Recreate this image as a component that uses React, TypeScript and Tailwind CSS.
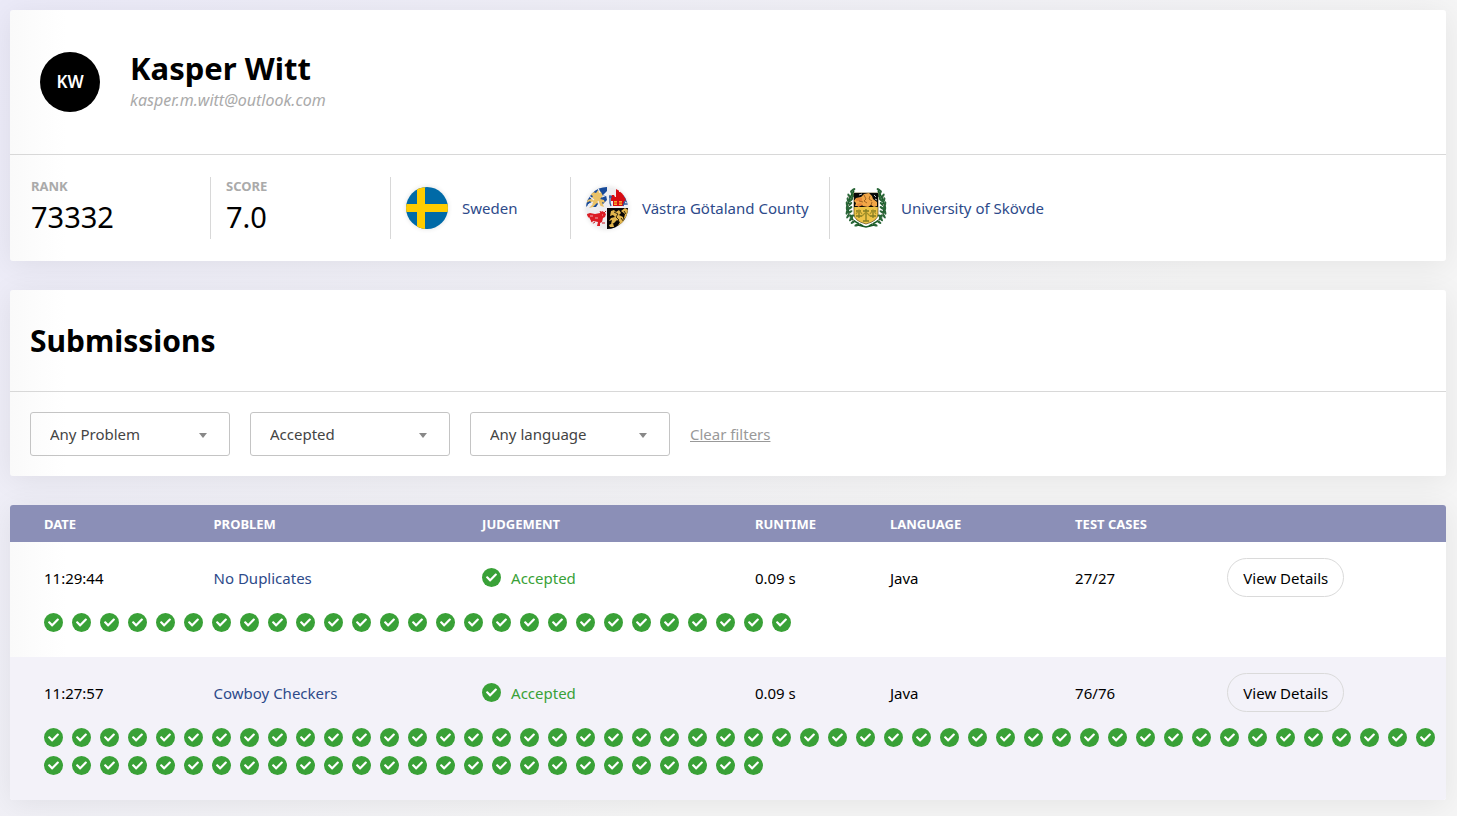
import { useState, type ReactNode } from "react";
import { FaCheck } from "react-icons/fa";

const CARD = "overflow-hidden rounded-[3px] bg-[linear-gradient(to_right,#fafafa,#ffffff_56px)] shadow-[0_4px_30px_rgba(0,0,0,0.07)]";

function CheckBadge() {
  return (
    <span className="flex size-[19px] shrink-0 items-center justify-center rounded-full bg-[#39a137]">
      <FaCheck className="size-[11px] text-white" aria-hidden="true" />
    </span>
  );
}

function Sweden() {
  return (
    <svg viewBox="0 0 42 42" className="size-[42px] rounded-full shadow-[0_0_5px_rgba(0,0,0,0.12)]" aria-hidden="true">
      <rect width="42" height="42" fill="#006aa7" />
      <path d="M11 0h8v42h-8zM0 17h42v8H0z" fill="#fecc00" />
    </svg>
  );
}

function VastraGotaland() {
  return (
    <svg viewBox="0 0 42 42" className="size-[42px] rounded-full shadow-[0_0_5px_rgba(0,0,0,0.12)]" aria-hidden="true">
      <rect width="42" height="42" fill="#eeeef0" />
      <path d="M21 21h21v21H21z" fill="#080604" />
      <path d="M0 20V14l7-9 6-5h8v4l-5 5 4-1 1 5-6 6-1-5-4 6H5l4-5-5 1z" fill="#174a99" />
      <path d="M7 5l3 1 2-3 3 2 2 4-3 3 4 1 1 3-3-1 2 5-3-1-4-3-4 4-4 1 4-4-3-3-4 2 1-3 4-1 2-3-4-2z" fill="#eac268" />
      <path d="M3 9l5 4M12 1l2 5M16 10l5-2M12 14l2 6M2 18l5-3" stroke="#eeeef0" strokeWidth="1.2" fill="none" />
      <path d="M26 8h2l1 2h1V2h3v3h1V2h2v3h2v5h1V8h1v6h-2v5H27v-5h-2V9z" fill="#d80b12" />
      <path d="M28 14h3v4h-3zM33 14h3v4h-3z" fill="#f5ae28" />
      <path d="M28 16h3M33 16h3" stroke="#d80b12" strokeWidth="0.8" />
      <path d="M24 8v8l1 3M23 10h3M38 9l2 2v3l2 2M37 19l2-5M38 17h4" stroke="#315a9d" strokeWidth="1.3" fill="none" />
      <path d="M1 27l3-1 5 1 5-1 2-2 2 1 2 2-1 3-2 1-1 4-2 1v3h-3l1-4-5-1-2 3H3l2-3-2-4-2 3z" fill="#dc1c24" />
      <path d="M15 26l-1-2M18 26l2-2M1 27v7M9 35l-3 2M16 36h3" stroke="#c5161f" strokeWidth="1" fill="none" />
      <path d="M4 29h3M9 31h3M16 28h1" stroke="#eeeef0" strokeWidth="0.7" />
      <path d="M25 24l3-1 2 2 3-2 2 3-2 2 4 2 1 4-3 5-4 1 3-5-3-2-3 3-3 1 1-4-3 1 2-3 4-1-2-2-3 1z" fill="#e3b64d" />
      <path d="M35 24l4-3 3 2v12l-4-4 1-4zM23 38l4-2 1 4h-4zM36 35l4-3v6l-5 1z" fill="#e3b64d" />
      <path d="M28 25l4 2-2 3 3 3-2 2M35 31l3 4-2 4M38 24l2 3" stroke="#080604" strokeWidth="0.8" fill="none" />
    </svg>
  );
}

const LEAVES = [
  [8, 3, 55], [7, 6, -35], [4, 9, -25], [3, 13, -15], [2, 17, -10], [2, 21, 0], [2, 25, 15],
  [3, 29, 30], [6, 32, 40], [8, 35, 55], [12, 38, 70],
  [8, 9, 40], [6, 13, 45], [5, 17, 50], [5, 21, 55], [5, 25, 60], [7, 29, 70],
];

function Laurel() {
  return (
    <g>
      <path d="M9 4Q-3 21 9 34l9 5" fill="none" stroke="#155b22" strokeWidth="1.5" />
      {LEAVES.map(([x, y, angle]) => (
        <ellipse key={`${x}-${y}`} cx={x} cy={y} rx="1.2" ry="2.8" fill="#2a6638" transform={`rotate(${angle} ${x} ${y})`} />
      ))}
      <path d="M3 10h1M3 18h1M4 27h1M8 33h1M14 37h1" stroke="#d5aeb4" strokeWidth="1.2" />
    </g>
  );
}

function Skovde() {
  return (
    <svg viewBox="0 0 42 42" className="size-[42px]" aria-hidden="true">
      <Laurel />
      <g transform="matrix(-1 0 0 1 42 0)">
        <Laurel />
      </g>
      <path d="M9 6h24v21q0 7-12 10Q9 34 9 27z" fill="#edc347" stroke="#5b4b14" strokeWidth="0.7" />
      <path d="M9 6h24v14H9z" fill="#090909" />
      <path d="M11 11l5-1 3-3 5-1 3 3 1 3 4 3v4l-3 1-3-2-3 2-5-1-2-2-3 2h-3l1-3-2-2z" fill="#f2a647" />
      <path d="M11 11h6v3h-6zM12 17l4-1 2 2-5 2z" fill="#e8883a" />
      <path d="M19 8l2 4-2 2 3 2M25 9l-1 3 3 2M14 14l4 1M27 15l-1 3" stroke="#8c5419" strokeWidth="0.8" fill="none" />
      <path d="M14 8l3-1M29 8l2 2M30 12l2 1" stroke="#d9dadd" strokeWidth="0.9" fill="none" />
      <path d="M21 22v12M14 25v6M28 25v6M11 24h5M18 24h6M26 24h5M11 29h6M25 29h6M18 34h6" stroke="#817c23" strokeWidth="1.3" />
      <path d="M11 27l3-4 3 4M25 27l3-4 3 4M17 29l4-4 4 4" stroke="#a49128" strokeWidth="1.2" fill="none" />
      <path d="M13 38l8 2 8-2" stroke="#185825" strokeWidth="1.4" fill="none" />
    </svg>
  );
}

function Figure({ label, value }: { label: string; value: string }) {
  return (
    <div className="flex flex-col">
      <span className="text-[13px] leading-[18px] font-bold text-[#aaaaaa]">{label}</span>
      <span className="text-[29px] leading-[44px]">{value}</span>
    </div>
  );
}

function Place({ icon, name, className }: { icon: ReactNode; name: string; className: string }) {
  return (
    <div className={`flex items-center gap-[14px] px-[15px] ${className}`}>
      {icon}
      <a href="#" className="text-[#2d4a8a]">{name}</a>
    </div>
  );
}

function Filter({ label, options, initial }: { label: string; options: string[]; initial: string }) {
  const [value, setValue] = useState(initial);
  return (
    <div className="relative w-[200px]">
      <select
        aria-label={label}
        value={value}
        onChange={(e) => setValue(e.target.value)}
        className="h-11 w-full appearance-none rounded-[3px] border border-[#c4c4c4] bg-transparent pr-10 pl-[19px] text-[15px] text-[#444444]"
      >
        {options.map((o) => (
          <option key={o}>{o}</option>
        ))}
      </select>
      <svg viewBox="0 0 8 5" className="pointer-events-none absolute top-[21px] right-[23px] h-[5px] w-[8px]" aria-hidden="true">
        <path d="M0 0h8L4 5z" fill="#888888" />
      </svg>
    </div>
  );
}

const COLUMNS = [
  { name: "DATE", width: "w-[13.2%]" },
  { name: "PROBLEM", width: "w-[18.7%]" },
  { name: "JUDGEMENT", width: "w-[19%]" },
  { name: "RUNTIME", width: "w-[9.4%]" },
  { name: "LANGUAGE", width: "w-[12.9%]" },
  { name: "TEST CASES", width: "w-[10.6%]" },
];

const SUBMISSIONS = [
  { time: "11:29:44", problem: "No Duplicates", cases: 27, shade: "" },
  { time: "11:27:57", problem: "Cowboy Checkers", cases: 76, shade: "bg-[#f3f2f9]" },
];

function SubmissionRows({ time, problem, cases, shade }: (typeof SUBMISSIONS)[number]) {
  return (
    <tbody className={shade}>
      <tr className="h-[71px]">
        <td className="pl-[34px]">{time}</td>
        <td className="pl-[14px]">
          <a href="#" className="text-[#2d4a8a]">{problem}</a>
        </td>
        <td className="pl-[14px]">
          <span className="flex items-center gap-[10px] text-[#39a137]">
            <CheckBadge />
            Accepted
          </span>
        </td>
        <td className="pl-[14px]">0.09 s</td>
        <td className="pl-[14px]">Java</td>
        <td className="pl-[14px]">{cases}/{cases}</td>
        <td className="pl-[14px]">
          <button type="button" className="block h-[39px] w-[117px] rounded-full border border-[#dadada] whitespace-nowrap">
            View Details
          </button>
        </td>
      </tr>
      <tr>
        <td colSpan={7} className="pr-2 pb-[25px] pl-[34px]">
          <div className="flex flex-wrap gap-[9px]">
            {Array.from({ length: cases }, (_, i) => (
              <CheckBadge key={i} />
            ))}
          </div>
        </td>
      </tr>
    </tbody>
  );
}

export default function App() {
  return (
    <main className="flex min-h-screen flex-col gap-[29px] bg-[linear-gradient(135deg,#ebeaf8,#f5f5f5_65%)] pt-[10px] pr-[11px] pb-4 pl-[10px] font-['Noto_Sans',sans-serif] text-[15px] leading-6 text-black">
      <section className={CARD}>
        <header className="flex h-[144px] items-center gap-[30px] pl-[30px]">
          <div className="flex size-[60px] items-center justify-center rounded-full bg-black text-[17px] font-semibold text-white">KW</div>
          <div className="pb-1">
            <h1 className="text-[31px] leading-10 font-bold">Kasper Witt</h1>
            <p className="text-[16px] text-[#aaaaaa] italic">kasper.m.witt@outlook.com</p>
          </div>
        </header>
        <div className="flex flex-wrap border-t border-[#d8d8d8] py-[22px] pl-[21px]">
          <div className="w-[180px] border-r border-[#d8d8d8]">
            <Figure label="RANK" value="73332" />
          </div>
          <div className="w-[180px] border-r border-[#d8d8d8] pl-[15px]">
            <Figure label="SCORE" value="7.0" />
          </div>
          <Place icon={<Sweden />} name="Sweden" className="min-w-[180px] border-r border-[#d8d8d8]" />
          <Place icon={<VastraGotaland />} name="Västra Götaland County" className="min-w-[259px] border-r border-[#d8d8d8]" />
          <Place icon={<Skovde />} name="University of Skövde" className="min-w-[180px]" />
        </div>
      </section>

      <section className={CARD}>
        <h2 className="flex h-[101px] items-center pl-5 text-[30px] font-bold">Submissions</h2>
        <form className="flex flex-wrap items-center gap-5 border-t border-[#d8d8d8] p-5">
          <Filter label="Problem" initial="Any Problem" options={["Any Problem", "No Duplicates", "Cowboy Checkers"]} />
          <Filter label="Judgement" initial="Accepted" options={["Any judgement", "Accepted"]} />
          <Filter label="Language" initial="Any language" options={["Any language", "Java"]} />
          <a href="#" className="text-[#999999] underline">Clear filters</a>
        </form>
      </section>

      <section className={CARD}>
        <table className="w-full table-fixed border-collapse text-left">
          <thead>
            <tr className="h-[37px] bg-[#8b8fb7] text-[13px] leading-4 text-white">
              {COLUMNS.map((c) => (
                <th key={c.name} className={`${c.width} pl-[14px] font-bold first:pl-[34px]`}>{c.name}</th>
              ))}
              <th aria-label="Actions" />
            </tr>
          </thead>
          {SUBMISSIONS.map((s) => (
            <SubmissionRows key={s.time} {...s} />
          ))}
        </table>
      </section>
    </main>
  );
}
